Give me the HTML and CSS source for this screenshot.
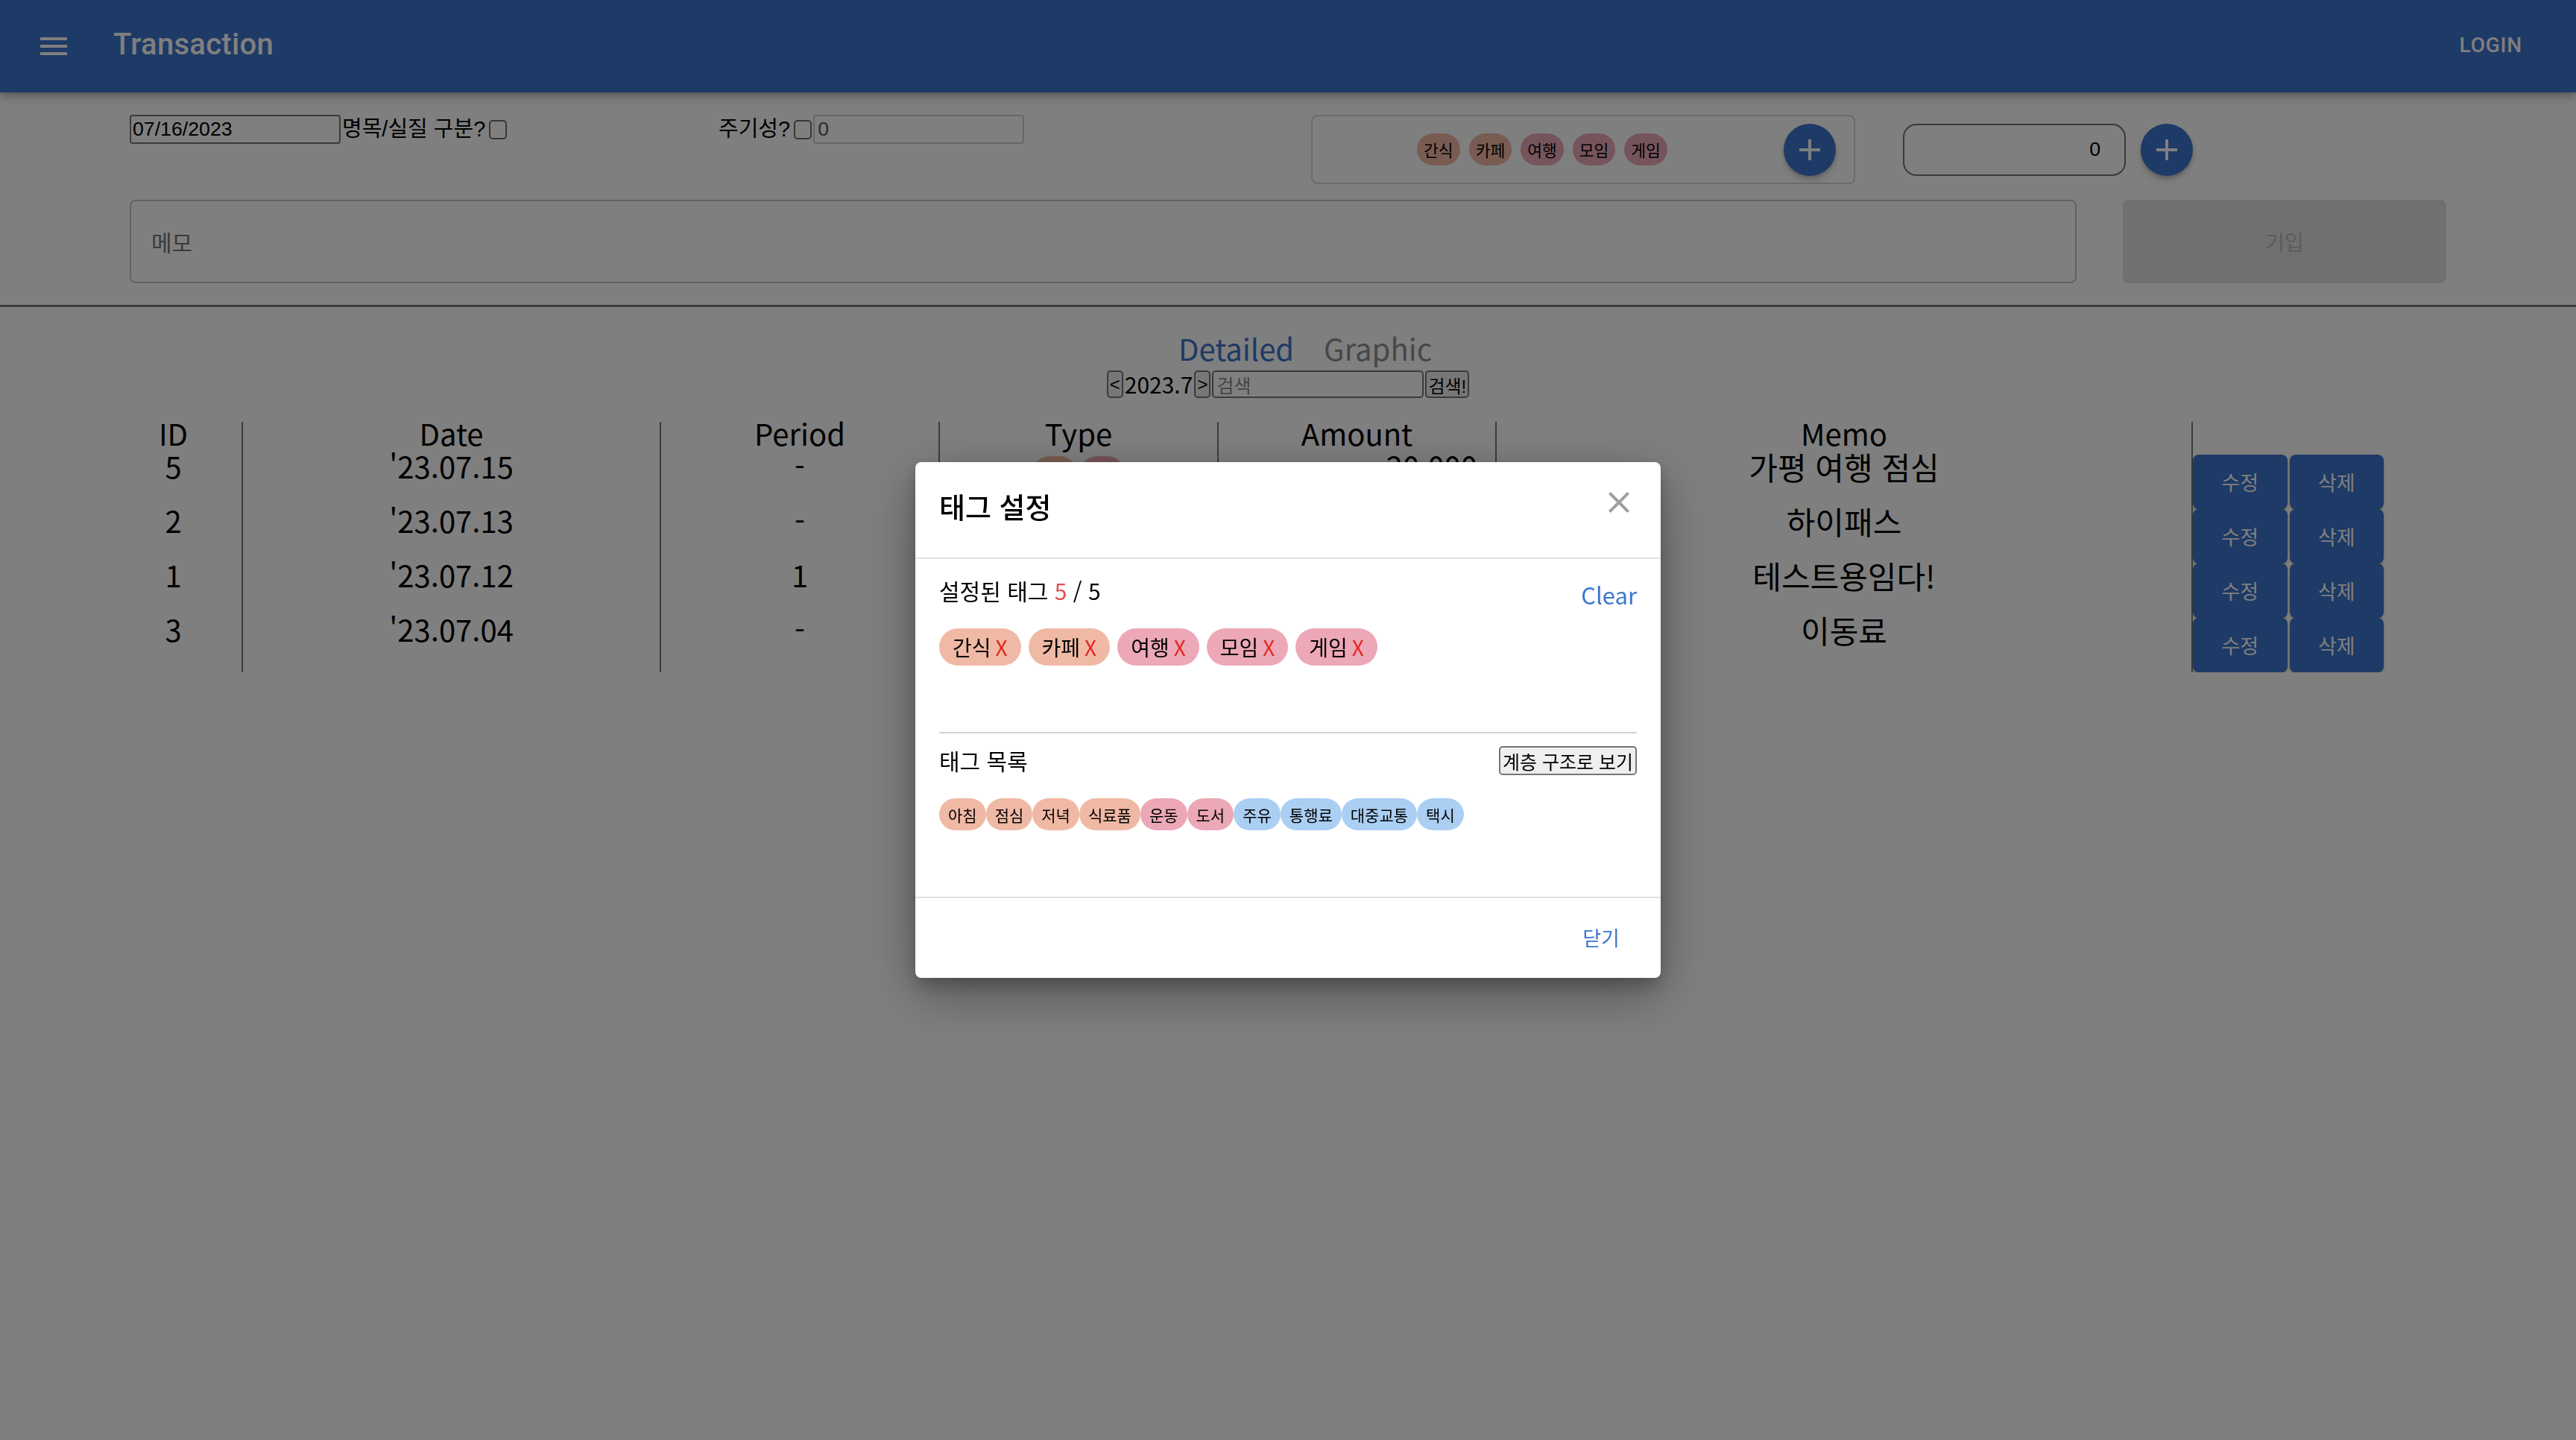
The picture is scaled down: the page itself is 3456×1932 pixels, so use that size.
FILE: index.html
```html
<!DOCTYPE html>
<html lang="ko">
<head>
<meta charset="utf-8">
<title>Transaction</title>
<link rel="stylesheet" href="styles.css">
</head>
<body>
<header class="appbar">
  <button class="menu-btn" aria-label="menu">
    <svg viewBox="0 0 24 24" width="48" height="48"><path d="M3 18h18v-2H3v2zm0-5h18v-2H3v2zm0-7v2h18V6H3z" fill="currentColor"/></svg>
  </button>
  <h1 class="app-title">Transaction</h1>
  <button class="login-btn">Login</button>
</header>

<section class="entry">
  <div class="entry-row">
    <div class="field-group">
      <input class="date-input" type="text" value="07/16/2023"><label class="field-label">명목/실질 구분?</label><input type="checkbox" class="check">
    </div>
    <div class="field-group">
      <label class="field-label">주기성?</label><input type="checkbox" class="check"><input class="period-input" type="text" value="0" disabled>
    </div>
    <div class="tag-box">
      <div class="tag-box-chips">
        <span class="chip chip-sm salmon">간식</span>
        <span class="chip chip-sm salmon">카페</span>
        <span class="chip chip-sm pink">여행</span>
        <span class="chip chip-sm pink">모임</span>
        <span class="chip chip-sm pink">게임</span>
      </div>
      <button class="fab" aria-label="add tag"><svg viewBox="0 0 24 24" width="48" height="48"><path d="M19 13h-6v6h-2v-6H5v-2h6V5h2v6h6v2z" fill="currentColor"/></svg></button>
    </div>
    <div class="amount-group">
      <input class="amount-input" type="text" value="0">
      <button class="fab" aria-label="add amount"><svg viewBox="0 0 24 24" width="48" height="48"><path d="M19 13h-6v6h-2v-6H5v-2h6V5h2v6h6v2z" fill="currentColor"/></svg></button>
    </div>
  </div>
  <div class="memo-row">
    <input class="memo-input" type="text" placeholder="메모">
    <button class="submit-btn" disabled>기입</button>
  </div>
</section>

<nav class="tabs">
  <button class="tab active">Detailed</button>
  <button class="tab">Graphic</button>
</nav>

<div class="month-nav">
  <button class="nav-btn">&lt;</button><span class="nav-month">2023.7</span><button class="nav-btn">&gt;</button><input class="search-input" type="text" placeholder="검색"><button class="nav-btn search-btn">검색!</button>
</div>

<table class="tx-table">
  <colgroup>
    <col class="c-id"><col class="c-date"><col class="c-period"><col class="c-type"><col class="c-amount"><col class="c-memo"><col class="c-actions">
  </colgroup>
  <thead>
    <tr><th>ID</th><th>Date</th><th>Period</th><th>Type</th><th>Amount</th><th>Memo</th><th></th></tr>
  </thead>
  <tbody>
    <tr>
      <td>5</td><td>'23.07.15</td><td>-</td>
      <td><div class="type-chips"><span class="chip chip-sm salmon">점심</span><span class="chip chip-sm pink">여행</span></div></td>
      <td class="amount">20,000</td><td class="memo">가평 여행 점심</td>
      <td><div class="actions"><button class="row-btn">수정</button><button class="row-btn">삭제</button></div></td>
    </tr>
    <tr>
      <td>2</td><td>'23.07.13</td><td>-</td>
      <td><div class="type-chips"><span class="chip chip-sm sky">통행료</span></div></td>
      <td class="amount">3,400</td><td class="memo">하이패스</td>
      <td><div class="actions"><button class="row-btn">수정</button><button class="row-btn">삭제</button></div></td>
    </tr>
    <tr>
      <td>1</td><td>'23.07.12</td><td>1</td>
      <td><div class="type-chips"><span class="chip chip-sm pink">도서</span></div></td>
      <td class="amount">12,000</td><td class="memo">테스트용임다!</td>
      <td><div class="actions"><button class="row-btn">수정</button><button class="row-btn">삭제</button></div></td>
    </tr>
    <tr>
      <td>3</td><td>'23.07.04</td><td>-</td>
      <td><div class="type-chips"><span class="chip chip-sm sky">대중교통</span></div></td>
      <td class="amount">1,250</td><td class="memo">이동료</td>
      <td><div class="actions"><button class="row-btn">수정</button><button class="row-btn">삭제</button></div></td>
    </tr>
  </tbody>
</table>

<div class="backdrop">
  <div class="dialog" role="dialog" aria-labelledby="dlg-title">
    <div class="dialog-header">
      <h2 class="dialog-title" id="dlg-title">태그 설정</h2>
      <button class="dialog-close" aria-label="close"><svg viewBox="0 0 24 24" width="48" height="48"><path d="M19 6.41 17.59 5 12 10.59 6.41 5 5 6.41 10.59 12 5 17.59 6.41 19 12 13.41 17.59 19 19 17.59 13.41 12z" fill="currentColor"/></svg></button>
    </div>
    <div class="dialog-content">
      <div class="tag-section selected">
        <div class="section-head">
          <span class="section-title">설정된 태그 <span class="count">5</span> / 5</span>
          <button class="clear-btn">Clear</button>
        </div>
        <div class="chip-row spaced">
          <span class="chip chip-lg salmon">간식 <span class="remove">X</span></span>
          <span class="chip chip-lg salmon">카페 <span class="remove">X</span></span>
          <span class="chip chip-lg pink">여행 <span class="remove">X</span></span>
          <span class="chip chip-lg pink">모임 <span class="remove">X</span></span>
          <span class="chip chip-lg pink">게임 <span class="remove">X</span></span>
        </div>
      </div>
      <div class="tag-section list">
        <div class="section-head centered">
          <span class="section-title small">태그 목록</span>
          <button class="native-btn">계층 구조로 보기</button>
        </div>
        <div class="chip-row">
          <span class="chip chip-md salmon">아침</span>
          <span class="chip chip-md salmon">점심</span>
          <span class="chip chip-md salmon">저녁</span>
          <span class="chip chip-md salmon">식료품</span>
          <span class="chip chip-md pink">운동</span>
          <span class="chip chip-md pink">도서</span>
          <span class="chip chip-md sky">주유</span>
          <span class="chip chip-md sky">통행료</span>
          <span class="chip chip-md sky">대중교통</span>
          <span class="chip chip-md sky">택시</span>
        </div>
      </div>
    </div>
    <div class="dialog-actions">
      <button class="close-btn">닫기</button>
    </div>
  </div>
</div>
</body>
</html>
```

FILE: styles.css
```css
* { box-sizing: border-box; }
html, body { margin: 0; padding: 0; }
body {
  background: #fff;
  color: #000;
  font-family: "Noto Sans CJK KR", sans-serif;
  overflow: hidden;
}
button { font-family: inherit; cursor: pointer; }

/* ---------- App bar ---------- */
.appbar {
  position: relative;
  z-index: 1;
  display: flex;
  align-items: center;
  height: 124px;
  padding: 0 48px;
  background: #3c74cc;
  color: #fff;
  box-shadow: 0 4px 8px -2px rgba(0,0,0,.25), 0 8px 10px 1px rgba(0,0,0,.12);
}
.menu-btn {
  display: flex;
  padding: 24px;
  margin: 0 32px 0 -24px;
  border: 0;
  background: none;
  color: inherit;
}
.app-title {
  flex: 1;
  margin: 0 0 4px;
  font: 500 40px/1.6 Roboto, sans-serif;
  letter-spacing: 0.3px;
}
.login-btn {
  margin-bottom: 3px;
  border: 0;
  background: none;
  color: #fff;
  font: 500 28px/1.75 Roboto, sans-serif;
  letter-spacing: 0.8px;
  text-transform: uppercase;
  padding: 12px 24px 12px 16px;
}

/* ---------- Entry form ---------- */
.entry {
  padding: 30px 174px 29px;
  border-bottom: 3px solid #7b7b7b;
}
.entry-row {
  display: grid;
  grid-template-columns: 790px 795px 794px auto;
  align-items: start;
  height: 93px;
}
.field-group {
  display: flex;
  align-items: center;
  font: 29px "Liberation Sans", "Noto Sans CJK KR", sans-serif;
}
.field-label { line-height: 39px; }
.date-input {
  width: 283px;
  height: 39px;
  margin: 0 2px 0 0;
  padding: 0 2px;
  border: 2px solid #767676;
  border-radius: 4px;
  background: #fff;
  color: #000;
  font: 26.7px "Liberation Sans", sans-serif;
}
.check {
  appearance: none;
  -webkit-appearance: none;
  flex: none;
  width: 24px;
  height: 26px;
  margin: 0 2px 0 5px;
  border: 2px solid #6f6f6f;
  border-radius: 5px;
  background: #fff;
}
.period-input {
  width: 283px;
  height: 39px;
  padding: 0 4px;
  border: 2px solid #cfcfcf;
  border-radius: 4px;
  background: #fff;
  color: #555;
  font: 26.7px "Liberation Sans", sans-serif;
}
.tag-box {
  display: flex;
  align-items: center;
  width: 730px;
  height: 93px;
  padding: 0 24px 0 0;
  border: 2px solid #d6d6d6;
  border-radius: 8px;
}
.tag-box-chips {
  flex: 1;
  display: flex;
  justify-content: center;
  gap: 12px;
  margin-right: 16px;
}
.fab {
  display: flex;
  align-items: center;
  justify-content: center;
  width: 70px;
  height: 70px;
  padding: 0;
  border: 0;
  border-radius: 50%;
  background: #3c74cc;
  color: #fff;
  box-shadow: 0 3px 5px -1px rgba(0,0,0,.2), 0 6px 10px rgba(0,0,0,.14);
}
.amount-group {
  align-self: center;
  display: flex;
  align-items: center;
  gap: 20px;
}
.amount-input {
  width: 299px;
  height: 70px;
  padding: 0 32px 0 12px;
  border: 2px solid #767676;
  border-radius: 18px;
  background: #fff;
  color: #000;
  text-align: right;
  font: 26.7px "Liberation Sans", sans-serif;
}
.memo-row {
  display: flex;
  gap: 62px;
  height: 112px;
  margin-top: 21px;
}
.memo-input {
  flex: 1;
  height: 112px;
  padding: 0 27px;
  border: 2px solid #c4c4c4;
  border-radius: 8px;
  background: #fff;
  font: 30px "Noto Sans CJK KR", sans-serif;
}
.memo-input::placeholder { color: #757575; }
.submit-btn {
  width: 434px;
  height: 112px;
  border: 0;
  border-radius: 8px;
  background: #e0e0e0;
  color: #b6b6b6;
  font-size: 28px;
}

/* ---------- Tabs & month navigation ---------- */
.tabs {
  display: flex;
  justify-content: center;
  gap: 40px;
  margin-top: 31px;
  padding-left: 46px;
}
.tab {
  padding: 0;
  border: 0;
  background: none;
  color: #8f8f8f;
  font-size: 40px;
  line-height: 48px;
}
.tab.active { color: #3c74cc; }

.month-nav {
  display: flex;
  justify-content: center;
  gap: 2px;
  height: 37px;
  margin-top: 6px;
}
.nav-btn {
  height: 37px;
  padding: 0 2px;
  border: 2px solid #767676;
  border-radius: 5px;
  background: #efefef;
  color: #000;
  font: 24px "Liberation Sans", "Noto Sans CJK KR", sans-serif;
}
.search-btn { font-size: 24px; }
.nav-month {
  font-size: 30px;
  line-height: 37px;
}
.search-input {
  width: 284px;
  height: 37px;
  padding: 0 4px;
  border: 2px solid #767676;
  border-radius: 5px;
  background: #fff;
  font: 25px "Noto Sans CJK KR", sans-serif;
}
.search-input::placeholder { color: #8a8a8a; }

/* ---------- Table ---------- */
.tx-table {
  width: 3057px;
  margin: 32px 0 0 141px;
  border-collapse: collapse;
  table-layout: fixed;
  font-size: 40px;
}
.c-id { width: 184px; }
.c-date { width: 561px; }
.c-period { width: 374px; }
.c-type { width: 374px; }
.c-amount { width: 373px; }
.c-memo { width: 934px; }
.c-actions { width: 257px; }
.tx-table th,
.tx-table td {
  padding: 0;
  line-height: 31px;
  text-align: center;
  vertical-align: top;
  font-weight: 400;
}
.tx-table th { padding-bottom: 13px; }
.tx-table th + th,
.tx-table td + td { border-left: 2px solid #7a7a7a; }
.tx-table td.amount { text-align: right; padding-right: 24px; }
.tx-table td.memo { font-size: 42px; }
.type-chips {
  display: flex;
  justify-content: center;
  gap: 6px;
  padding-top: 2px;
}
.actions {
  display: flex;
  gap: 3px;
}
.row-btn {
  width: 127px;
  height: 73px;
  padding: 0;
  border: 0;
  border-radius: 8px;
  background: #3c74cc;
  color: #fff;
  font-size: 27px;
  box-shadow: 0 3px 1px -2px rgba(0,0,0,.2), 0 2px 2px rgba(0,0,0,.14), 0 1px 5px rgba(0,0,0,.12);
}

/* ---------- Chips ---------- */
.chip {
  display: inline-flex;
  align-items: center;
  justify-content: center;
  white-space: nowrap;
  color: #000;
}
.chip-sm {
  height: 43px;
  padding: 0 9px;
  border-radius: 22px;
  font-size: 21.5px;
}
.chip-md {
  height: 43px;
  padding: 0 12px;
  border-radius: 22px;
  font-size: 21px;
}
.chip-lg {
  height: 50px;
  padding: 0 18px;
  border-radius: 25px;
  font-size: 28px;
}
.chip-lg .remove {
  margin-left: 6px;
  color: #e3261f;
}
.salmon { background: #f0b9a5; }
.pink { background: #eca8b6; }
.sky { background: #abcff3; }

/* ---------- Dialog ---------- */
.backdrop {
  position: fixed;
  inset: 0;
  z-index: 10;
  display: flex;
  align-items: center;
  justify-content: center;
  background: rgba(0,0,0,.5);
}
.dialog {
  width: 1000px;
  overflow: hidden;
  border-radius: 8px;
  background: #fff;
  box-shadow: 0 22px 70px rgba(0,0,0,.35), 0 10px 20px rgba(0,0,0,.2);
}
.dialog-header {
  position: relative;
  display: flex;
  align-items: center;
  height: 130px;
  padding: 0 32px 12px;
  border-bottom: 2px solid #e0e0e0;
}
.dialog-title {
  margin: 0;
  font-size: 38px;
  font-weight: 500;
}
.dialog-close {
  position: absolute;
  top: 30px;
  right: 32px;
  display: flex;
  padding: 0;
  border: 0;
  background: none;
  color: #9e9e9e;
}
.dialog-content { padding: 0 32px; }
.tag-section.selected {
  padding: 22px 0 89px;
  border-bottom: 2px solid #d2d2d2;
}
.tag-section.list { padding: 17px 0 89px; }
.section-head {
  display: flex;
  justify-content: space-between;
  align-items: flex-start;
  height: 40px;
}
.section-head.centered {
  align-items: center;
  height: 39px;
}
.section-title {
  font-size: 30px;
  line-height: 40px;
}
.section-title.small {
  font-size: 30px;
  line-height: 39px;
}
.count { color: #e84a4a; }
.clear-btn {
  padding: 6px 0 0;
  border: 0;
  background: none;
  color: #3b76d0;
  font-size: 31px;
  line-height: 40px;
}
.native-btn {
  height: 39px;
  padding: 0 3px;
  border: 2px solid #767676;
  border-radius: 5px;
  background: #efefef;
  color: #000;
  font-size: 25px;
}
.chip-row {
  display: flex;
  margin-top: 31px;
}
.chip-row.spaced { gap: 10px; }
.dialog-actions {
  display: flex;
  justify-content: flex-end;
  align-items: center;
  height: 109px;
  padding: 0 16px 3px 0;
  border-top: 2px solid #e0e0e0;
}
.close-btn {
  min-width: 128px;
  padding: 12px 16px;
  border: 0;
  background: none;
  color: #3b76d0;
  font-size: 27px;
}
```
